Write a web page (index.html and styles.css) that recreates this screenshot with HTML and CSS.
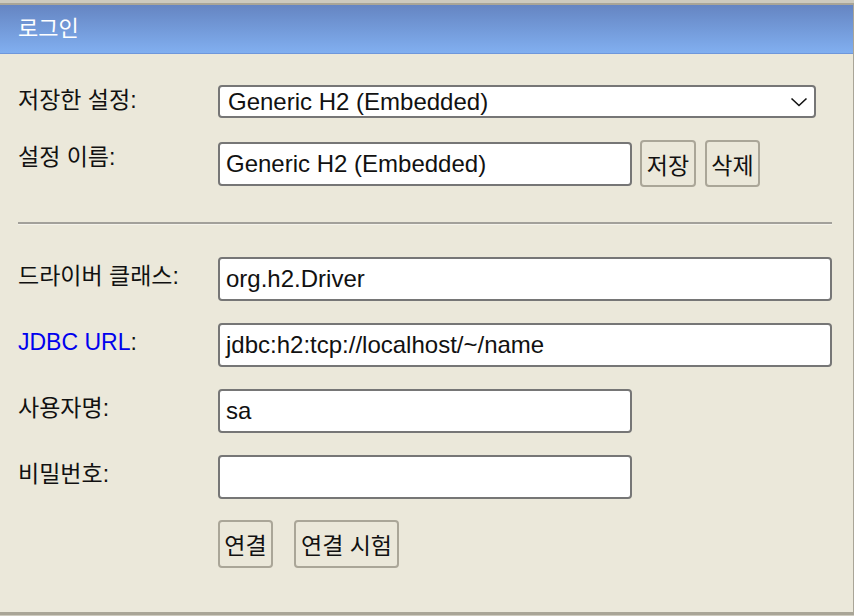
FILE: index.html
```html
<!DOCTYPE html>
<html lang="ko">
<head>
<meta charset="utf-8">
<link rel="stylesheet" href="styles.css">
</head>
<body>
<div class="panel">
  <div class="header">로그인</div>
  <div class="content">
    <div class="row r1">
      <label class="lbl">저장한 설정:</label>
      <div class="select-wrap">
        <div class="select">Generic H2 (Embedded)</div>
        <svg class="chev" width="18" height="10" viewBox="0 0 18 10"><path d="M1.5 1.5 L9 8.5 L16.5 1.5" fill="none" stroke="#111" stroke-width="1.6"/></svg>
      </div>
    </div>
    <div class="row r2">
      <label class="lbl">설정 이름:</label>
      <div class="ctl">
        <div class="input short">Generic H2 (Embedded)</div>
        <button class="btn b-save">저장</button>
        <button class="btn b-del">삭제</button>
      </div>
    </div>
    <div class="sep"></div>
    <div class="row">
      <label class="lbl">드라이버 클래스:</label>
      <div class="input long">org.h2.Driver</div>
    </div>
    <div class="row">
      <label class="lbl"><span class="link">JDBC URL</span>:</label>
      <div class="input long">jdbc:h2:tcp://localhost/~/name</div>
    </div>
    <div class="row">
      <label class="lbl">사용자명:</label>
      <div class="input short">sa</div>
    </div>
    <div class="row r6">
      <label class="lbl">비밀번호:</label>
      <div class="input short"></div>
    </div>
    <div class="row actions">
      <span></span>
      <div class="ctl">
        <button class="btn b-conn">연결</button>
        <button class="btn b-test">연결 시험</button>
      </div>
    </div>
  </div>
</div>
</body>
</html>
```
FILE: styles.css
```css
html, body {
  margin: 0;
  padding: 0;
}
body {
  background: #cdcabe;
  width: 854px;
  height: 616px;
  overflow: hidden;
  font-family: "Liberation Sans", "Noto Sans CJK KR", sans-serif;
  color: #111;
}
.panel {
  margin-top: 3px;
  height: 607px;
  background: #ebe8da;
  border-top: 2px solid #a9a597;
  border-right: 1px solid #a9a597;
  border-bottom: 3px solid #a9a597;
  box-sizing: content-box;
}
.header {
  height: 48px;
  line-height: 48px;
  background: linear-gradient(to bottom, #6585c2, #81aff0);
  border-bottom: 1px solid #6f97db;
  color: #fff;
  font-size: 22px;
  padding-left: 18px;
}
.content {
  padding: 31px 21px 0 18px;
}
.row {
  display: grid;
  grid-template-columns: 200px 1fr;
  align-items: start;
  margin-bottom: 22px;
}
.lbl {
  font-size: 23px;
  line-height: 26px;
  padding-top: 6px;
  white-space: nowrap;
}
.r1 .lbl { padding-top: 2px; }
.r2 .lbl { padding-top: 4px; }
.r2 { margin-bottom: 0; }
.link { color: #0000ee; }
.select-wrap {
  position: relative;
  width: 598px;
}
.select, .input {
  box-sizing: border-box;
  background: #fff;
  border: 2px solid #767676;
  border-radius: 4px;
  font-size: 24px;
  padding-left: 6px;
  display: flex;
  align-items: center;
  color: #111;
}
.select {
  height: 33px;
  padding-left: 8px;
}
.chev {
  position: absolute;
  right: 8px;
  top: 12px;
}
.input {
  height: 44px;
}
.input.long { width: 614px; }
.input.short { width: 414px; }
.ctl {
  display: flex;
  align-items: center;
}
.r2 .ctl { height: 47px; }
.btn {
  box-sizing: border-box;
  height: 47px;
  background: #ebe8da;
  border: 2px solid #aaa698;
  border-radius: 4px;
  font-family: "Liberation Sans", "Noto Sans CJK KR", sans-serif;
  font-size: 23px;
  color: #111;
  padding: 0;
  white-space: nowrap;
}
.b-save { width: 56px; margin-left: 8px; }
.b-del { width: 55px; margin-left: 9px; }
.b-conn { width: 55px; height: 48px; }
.b-test { width: 105px; height: 48px; margin-left: 21px; }
.sep {
  width: 814px;
  height: 2px;
  background: #a2a09a;
  border-bottom: 1px solid #f4f2ea;
  margin: 35px 0 32px 0;
}
.r6 { margin-bottom: 21px; }
```
